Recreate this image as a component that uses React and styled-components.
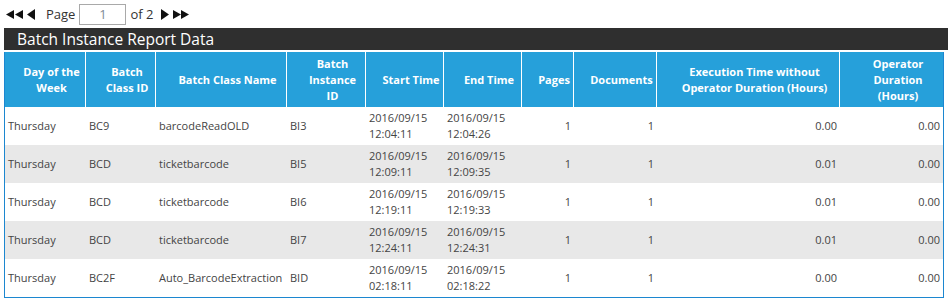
import React from "react";
import styled, { createGlobalStyle } from "styled-components";

const GlobalStyle = createGlobalStyle`
  body {
    margin: 0;
    background: #fff;
    font-family: "Open Sans", "Liberation Sans", sans-serif;
  }
`;

const Page = styled.div`
  width: 952px;
  height: 304px;
  padding: 0 4px;
  box-sizing: border-box;
  overflow: hidden;
`;

const Pager = styled.div`
  display: flex;
  align-items: center;
  height: 28px;
  padding-left: 2px;
  font-size: 13px;
  color: #333;
`;

const NavIcon = styled.svg`
  display: block;
  fill: #111;
  margin-right: ${(p) => p.$gap || 0}px;
`;

const PageInput = styled.div`
  width: 45px;
  height: 19px;
  border: 1px solid #a9a9a9;
  margin: 0 4px 0 4px;
  display: flex;
  align-items: center;
  justify-content: center;
  color: #7f8b96;
`;

const Caption = styled.div`
  height: 22px;
  background: #2f2f2f;
  color: #fff;
  font-size: 15.5px;
  line-height: 22px;
  padding-left: 13px;
  margin-bottom: 2px;
`;

const Table = styled.div`
  border: 1px solid #1c87d0;
  border-top: none;
  width: 940px;
  box-sizing: border-box;
`;

const Row = styled.div`
  display: grid;
  grid-template-columns: 81px 70px 131px 79px 78px 78px 52px 83px 183px 103px;
  height: ${(p) => (p.$head ? 55 : 38)}px;
  background: ${(p) => (p.$head ? "#26a0da" : p.$alt ? "#e8e8e8" : "#fff")};
`;

const HeadCell = styled.div`
  display: flex;
  align-items: center;
  justify-content: center;
  text-align: center;
  padding: 0 2px 0 15px;
  font-size: 11px;
  font-weight: 700;
  line-height: 16px;
  color: #fff;
  border-right: ${(p) => (p.$last ? "none" : "1px solid #fff")};
`;

const Cell = styled.div`
  display: flex;
  align-items: center;
  justify-content: ${(p) => (p.$num ? "flex-end" : "flex-start")};
  padding: 0 3px;
  font-size: 11px;
  line-height: 16px;
  color: #444;
  white-space: pre-line;
`;

const Label = styled.span`
  margin-right: ${(p) => p.$gap || 0}px;
`;

const heads = [
  "Day of the Week",
  "Batch Class ID",
  "Batch Class Name",
  "Batch Instance ID",
  "Start Time",
  "End Time",
  "Pages",
  "Documents",
  "Execution Time without Operator Duration (Hours)",
  "Operator Duration (Hours)",
];

const rows = [
  ["Thursday", "BC9", "barcodeReadOLD", "BI3", "2016/09/15\n12:04:11", "2016/09/15\n12:04:26", "1", "1", "0.00", "0.00"],
  ["Thursday", "BCD", "ticketbarcode", "BI5", "2016/09/15\n12:09:11", "2016/09/15\n12:09:35", "1", "1", "0.01", "0.00"],
  ["Thursday", "BCD", "ticketbarcode", "BI6", "2016/09/15\n12:19:11", "2016/09/15\n12:19:33", "1", "1", "0.01", "0.00"],
  ["Thursday", "BCD", "ticketbarcode", "BI7", "2016/09/15\n12:24:11", "2016/09/15\n12:24:31", "1", "1", "0.01", "0.00"],
  ["Thursday", "BC2F", "Auto_BarcodeExtraction", "BID", "2016/09/15\n02:18:11", "2016/09/15\n02:18:22", "1", "1", "0.00", "0.00"],
];

const First = () => (
  <NavIcon width="17" height="9" viewBox="0 0 17 9" $gap={4}>
    <polygon points="8,0 0,4.5 8,9" />
    <polygon points="17,0 9,4.5 17,9" />
  </NavIcon>
);
const Prev = () => (
  <NavIcon width="8" height="11" viewBox="0 0 8 11" $gap={11}>
    <polygon points="8,0 0,5.5 8,11" />
  </NavIcon>
);
const Next = () => (
  <NavIcon width="8" height="11" viewBox="0 0 8 11" $gap={4}>
    <polygon points="0,0 8,5.5 0,11" />
  </NavIcon>
);
const Last = () => (
  <NavIcon width="16" height="9" viewBox="0 0 16 9">
    <polygon points="0,0 8,4.5 0,9" />
    <polygon points="8,0 16,4.5 8,9" />
  </NavIcon>
);

export default function App() {
  return (
    <Page>
      <GlobalStyle />
      <Pager>
        <First />
        <Prev />
        <Label>Page</Label>
        <PageInput>1</PageInput>
        <Label $gap={8}>of 2</Label>
        <Next />
        <Last />
      </Pager>
      <Caption>Batch Instance Report Data</Caption>
      <Table>
        <Row $head>
          {heads.map((h, i) => (
            <HeadCell key={h} $last={i === heads.length - 1}>
              {h}
            </HeadCell>
          ))}
        </Row>
        {rows.map((r, ri) => (
          <Row key={ri} $alt={ri % 2 === 1}>
            {r.map((c, ci) => (
              <Cell key={ci} $num={ci >= 6}>
                {c}
              </Cell>
            ))}
          </Row>
        ))}
      </Table>
    </Page>
  );
}
